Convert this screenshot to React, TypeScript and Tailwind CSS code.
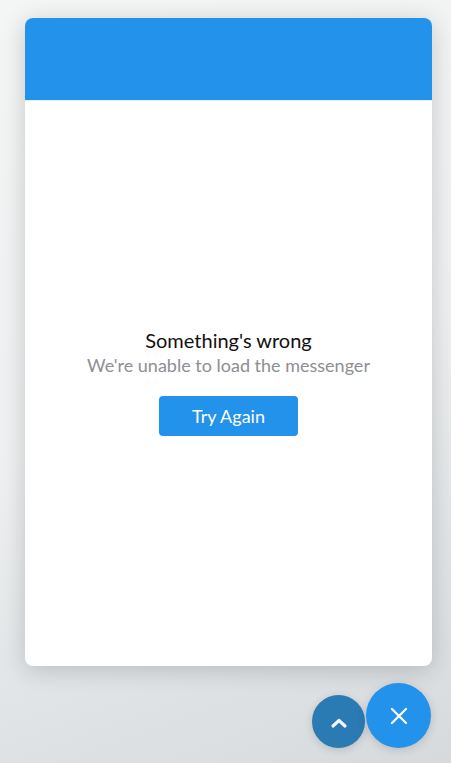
import React from "react";

export default function App() {
  return (
    <div
      className="w-[451px] h-[763px] overflow-hidden bg-[linear-gradient(160deg,#f4f5f5_0%,#eef0f1_50%,#d6dadd_100%)] pt-[18px] pl-[25px] pr-[19px]"
      style={{ fontFamily: "Lato, 'Open Sans', sans-serif" }}
    >
      <div className="w-[407px] h-[648px] rounded-[8px] bg-white overflow-hidden shadow-[0_4px_24px_rgba(0,0,0,0.18)] flex flex-col">
        <div className="h-[83px] bg-[#2392ea] border-b border-[#e8eef3]" />
        <div className="flex-1 flex flex-col items-center pt-[227px]">
          <div className="text-[20px] leading-[25px] text-[#111]">Something's wrong</div>
          <div className="text-[18px] leading-[24px] text-[#8e8e93]">We're unable to load the messenger</div>
          <button className="mt-[19px] w-[139px] h-[40px] rounded-[4px] bg-[#2392ea] text-white text-[18px]">
            Try Again
          </button>
        </div>
      </div>
      <div className="flex justify-end items-end mt-[17px] gap-[1px] pr-[1px]">
        <div className="w-[53px] h-[53px] rounded-full bg-[#2a7ab3] flex items-center justify-center shadow-[0_2px_8px_rgba(0,0,0,0.15)] mb-[15px]">
          <svg width="18" height="12" viewBox="0 0 18 12" className="mt-[3px]">
            <path d="M3 9 L9 3.5 L15 9" stroke="#f2f4f6" strokeWidth="3.2" fill="none" strokeLinecap="round" strokeLinejoin="round" />
          </svg>
        </div>
        <div className="w-[65px] h-[65px] rounded-full bg-[#2392ea] flex items-center justify-center shadow-[0_2px_10px_rgba(0,0,0,0.15)] mb-[15px]">
          <svg width="18" height="18" viewBox="0 0 18 18">
            <path d="M2 2 L16 16 M16 2 L2 16" stroke="#fff" strokeWidth="2.2" strokeLinecap="round" />
          </svg>
        </div>
      </div>
    </div>
  );
}
